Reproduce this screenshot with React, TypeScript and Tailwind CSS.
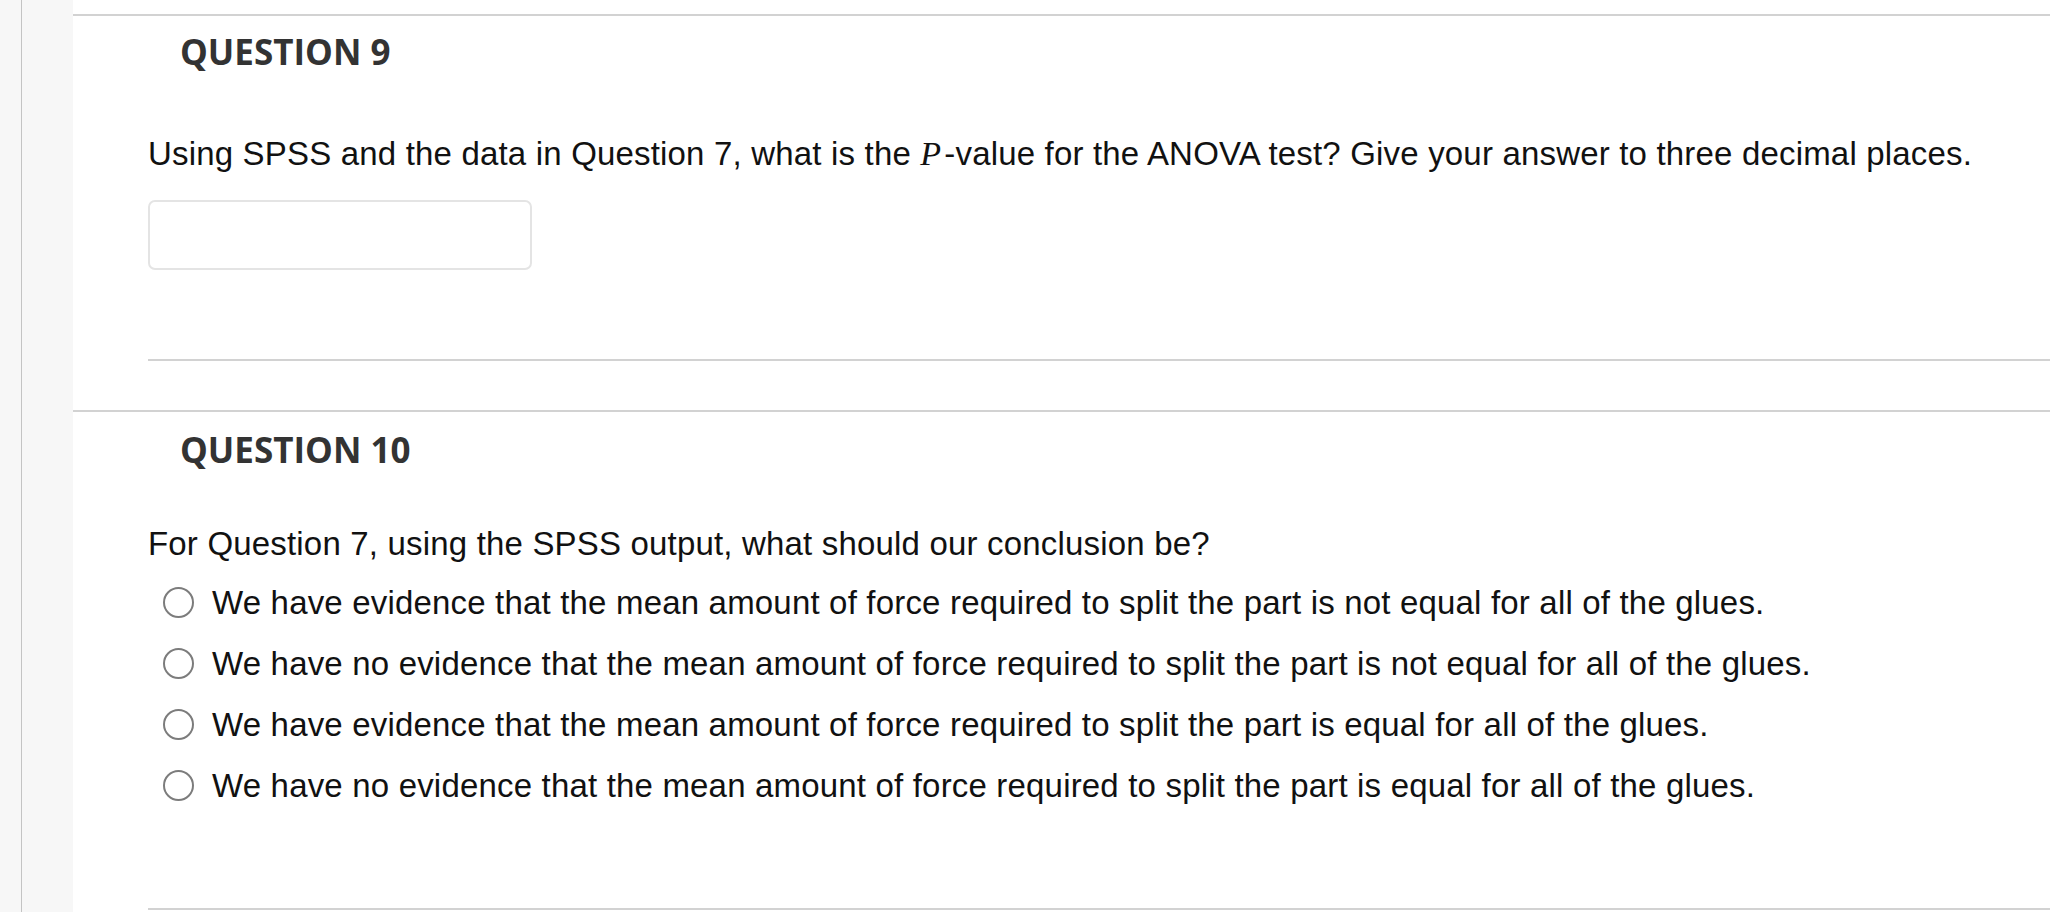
import { useState } from 'react'

const bodyFont = { fontFamily: '"Liberation Sans", Arial, sans-serif' }
const headFont = { fontFamily: '"Open Sans", "Liberation Sans", sans-serif' }

const options = [
  'We have evidence that the mean amount of force required to split the part is not equal for all of the glues.',
  'We have no evidence that the mean amount of force required to split the part is not equal for all of the glues.',
  'We have evidence that the mean amount of force required to split the part is equal for all of the glues.',
  'We have no evidence that the mean amount of force required to split the part is equal for all of the glues.',
]

export default function App() {
  const [answer, setAnswer] = useState('')
  const [choice, setChoice] = useState<number | null>(null)

  return (
    <div className="flex h-[912px] w-full overflow-hidden bg-white text-[#111]" style={bodyFont}>
      {/* left rail */}
      <div className="w-[73px] shrink-0 bg-[#f7f7f7]">
        <div className="ml-[21px] h-full w-px bg-[#c4c4c4]" />
      </div>

      <main className="min-w-0 flex-1 pt-[14px]">
        {/* question 9 */}
        <section className="border-t-2 border-[#d2d2d2]">
          <h2 className="pl-[107px] pt-[12px] text-[35px] leading-[48px] font-bold text-[#333]" style={headFont}>
            QUESTION 9
          </h2>
          <div className="pl-[75px]">
            <p className="mt-[60px] whitespace-nowrap text-[33px] leading-[36px] tracking-[0.18px]">
              Using SPSS and the data in Question 7, what is the{' '}
              <span className="mr-[3px] text-[34px] italic" style={{ fontFamily: '"Liberation Serif", "Times New Roman", serif' }}>
                P
              </span>
              -value for the ANOVA test? Give your answer to three decimal places.
            </p>
            <input
              type="text"
              value={answer}
              onChange={(e) => setAnswer(e.target.value)}
              className="mt-[28px] block h-[70px] w-[384px] rounded-[7px] border-2 border-[#e4e4e4] bg-white px-3 text-[28px] focus:outline-none"
            />
            <div className="mt-[89px] h-[2px] bg-[#d2d2d2]" />
          </div>
          <div className="h-[49px]" />
        </section>

        {/* question 10 */}
        <section className="border-t-2 border-[#d2d2d2]">
          <h2 className="pl-[107px] pt-[14px] text-[35px] leading-[48px] font-bold text-[#333]" style={headFont}>
            QUESTION 10
          </h2>
          <div className="pl-[75px]">
            <p className="mt-[52px] whitespace-nowrap text-[33px] leading-[36px] tracking-[0.18px]">
              For Question 7, using the SPSS output, what should our conclusion be?
            </p>
            <div className="mt-[10px] flex flex-col">
              {options.map((opt, i) => (
                <label key={i} className="flex h-[61px] cursor-pointer items-center pl-[15px]">
                  <input
                    type="radio"
                    name="q10"
                    checked={choice === i}
                    onChange={() => setChoice(i)}
                    className="h-[31px] w-[31px] shrink-0 appearance-none rounded-full border-2 border-[#7c7c7c] bg-white checked:border-[9px]"
                  />
                  <span className="ml-[18px] whitespace-nowrap text-[33px] leading-[36px] tracking-[0.18px]">{opt}</span>
                </label>
              ))}
            </div>
            <div className="mt-[92px] h-[2px] bg-[#d2d2d2]" />
          </div>
        </section>
      </main>
    </div>
  )
}
